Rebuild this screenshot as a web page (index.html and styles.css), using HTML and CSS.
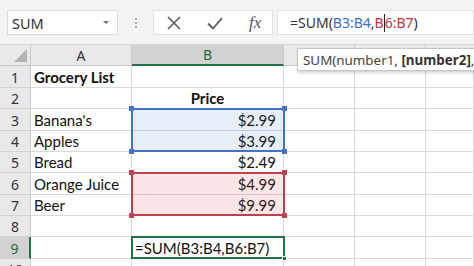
FILE: index.html
```html
<!DOCTYPE html>
<html>
<head>
<meta charset="utf-8">
<link rel="stylesheet" href="styles.css">
</head>
<body>
<div class="app">
  <div class="toolbar">
    <div class="namebox"><span class="nb-text">SUM</span><span class="nb-arrow"></span></div>
    <div class="grip"><i></i><i></i><i></i></div>
    <div class="buttons">
      <svg class="ico" width="16" height="16" viewBox="0 0 16 16"><path d="M2 2 L14 14 M14 2 L2 14" stroke="#5a5a5a" stroke-width="1.6" fill="none"/></svg>
      <svg class="ico" width="18" height="16" viewBox="0 0 18 16"><path d="M2 8.5 L7 13.5 L16 3" stroke="#5a5a5a" stroke-width="1.8" fill="none"/></svg>
      <span class="fx">fx</span>
    </div>
    <div class="formula"><span>=SUM(<span class="ref-b">B3:B4</span>,<span class="ref-r">B<span class="caret"></span>6:B7</span>)</span></div>
  </div>
  <div class="sheet">
    <div class="grid">
      <div class="corner"><span class="tri"></span></div>
      <div class="ch">A</div>
      <div class="ch sel">B</div>
      <div class="ch"></div>
      <div class="ch"></div>
      <div class="ch last"></div>

      <div class="rh">1</div><div class="c b">Grocery List</div><div class="c"></div><div class="c"></div><div class="c"></div><div class="c"></div>
      <div class="rh">2</div><div class="c"></div><div class="c b center">Price</div><div class="c"></div><div class="c"></div><div class="c"></div>
      <div class="rh">3</div><div class="c">Banana's</div><div class="c num">$2.99</div><div class="c"></div><div class="c"></div><div class="c"></div>
      <div class="rh">4</div><div class="c">Apples</div><div class="c num">$3.99</div><div class="c"></div><div class="c"></div><div class="c"></div>
      <div class="rh">5</div><div class="c">Bread</div><div class="c num">$2.49</div><div class="c"></div><div class="c"></div><div class="c"></div>
      <div class="rh">6</div><div class="c">Orange Juice</div><div class="c num">$4.99</div><div class="c"></div><div class="c"></div><div class="c"></div>
      <div class="rh">7</div><div class="c">Beer</div><div class="c num">$9.99</div><div class="c"></div><div class="c"></div><div class="c"></div>
      <div class="rh">8</div><div class="c"></div><div class="c"></div><div class="c"></div><div class="c"></div><div class="c"></div>
      <div class="rh sel">9</div><div class="c"></div><div class="c">=SUM(B3:B4,B6:B7)</div><div class="c"></div><div class="c"></div><div class="c"></div>
      <div class="rh">10</div><div class="c"></div><div class="c"></div><div class="c"></div><div class="c"></div><div class="c"></div>
    </div>
    <div class="range blue"><i class="h tl"></i><i class="h tr"></i><i class="h bl"></i><i class="h br"></i></div>
    <div class="range red"><i class="h tl"></i><i class="h tr"></i><i class="h bl"></i><i class="h br"></i></div>
    <div class="active"><i class="fill"></i></div>
  </div>
  <div class="tooltip"><span>SUM(number1, <b>[number2]</b>, [...])</span></div>
</div>
</body>
</html>
```
FILE: styles.css
```css
* { box-sizing: border-box; }
html, body { margin: 0; padding: 0; }
body { width: 474px; height: 266px; overflow: hidden; background: #fff; font-family: "Noto Sans", "Open Sans", sans-serif; }
.app { position: relative; width: 474px; height: 266px; overflow: hidden; }

.toolbar { height: 45px; background: #f3f3f3; display: flex; align-items: flex-start; padding-top: 10px; padding-left: 7px; border-bottom: 1px solid #d6d6d6; }
.namebox { width: 111px; height: 25px; background: #fff; border: 1px solid #dcdcdc; display: flex; align-items: center; justify-content: space-between; padding: 0 8px 0 4px; }
.nb-text { font-size: 14.5px; color: #333; }
.nb-arrow { width: 0; height: 0; border-left: 3px solid transparent; border-right: 3px solid transparent; border-top: 3px solid #777; }
.grip { width: 35px; height: 25px; display: flex; flex-direction: column; align-items: center; justify-content: center; gap: 2px; }
.grip i { display: block; width: 2px; height: 2px; background: #a8a8a8; }
.buttons { width: 120px; height: 25px; background: #fff; border: 1px solid #e2e2e2; display: flex; align-items: center; padding-left: 12px; gap: 24px; }
.ico { display: block; }
.fx { font-family: "Liberation Serif", serif; font-style: italic; font-size: 17px; color: #555; margin-left: 1px; }
.formula { flex: 1; height: 25px; margin-left: 4px; background: #fff; border: 1px solid #e2e2e2; font-size: 14px; color: #333; display: flex; align-items: center; padding-left: 12px; white-space: nowrap; }
.ref-b { color: #3b6fc9; }
.ref-r { color: #c8323c; }
.caret { display: inline-block; width: 1px; height: 18px; background: #222; vertical-align: -4px; }

.sheet { position: relative; }
.grid { display: grid; grid-template-columns: 31px 101px 152px 71px 71px 48px; grid-template-rows: 21px 22px 21px 22px 21px 21px 22px 21px 21px 22px 21px; font-family: "Lato", "Liberation Sans", sans-serif; font-size: 15px; color: #111; }
.corner { background: #e9e9e9; border-right: 1px solid #c9c9c9; border-bottom: 1px solid #c9c9c9; position: relative; }
.tri { position: absolute; right: 3px; bottom: 3px; width: 0; height: 0; border-left: 13px solid transparent; border-bottom: 13px solid #b5b5b5; }
.ch { background: #e9e9e9; border-right: 1px solid #c9c9c9; border-bottom: 1px solid #c9c9c9; display: flex; align-items: center; justify-content: center; font-family: "Noto Sans", sans-serif; font-size: 14px; color: #333; }
.ch.sel { background: #d2d2d2; border-bottom: 2px solid #217346; color: #1e6b41; }
.ch.last { border-right: none; }
.rh { background: #e9e9e9; border-right: 1px solid #c9c9c9; border-bottom: 1px solid #d2d2d2; display: flex; align-items: center; justify-content: center; font-family: "Noto Sans", sans-serif; font-size: 14px; color: #333; padding-top: 1px; }
.rh.sel { background: #d2d2d2; border-right: 2px solid #217346; color: #1e6b41; }
.c { border-right: 1px solid #dadada; border-bottom: 1px solid #dadada; display: flex; align-items: flex-end; padding: 0 3px 1px 3px; white-space: nowrap; overflow: visible; }
.c.b { font-weight: 700; }
.c.center { justify-content: center; }
.c.num { justify-content: flex-end; padding-right: 7px; }

.range { position: absolute; left: 131px; width: 154px; height: 44px; border: 2px solid; }
.range.blue { top: 63px; border-color: #4472c4; background: rgba(68, 114, 196, 0.12); }
.range.red { top: 127px; border-color: #c0404e; background: rgba(220, 80, 80, 0.14); }
.h { position: absolute; width: 5px; height: 5px; }
.blue .h { background: #4472c4; }
.red .h { background: #c0404e; }
.h.tl { left: -4px; top: -4px; }
.h.tr { right: -4px; top: -4px; }
.h.bl { left: -4px; bottom: -4px; }
.h.br { right: -4px; bottom: -4px; }
.active { position: absolute; left: 131px; top: 191px; width: 154px; height: 23px; border: 2px solid #217346; }
.fill { position: absolute; right: -4px; bottom: -4px; width: 5px; height: 5px; background: #217346; border: 1px solid #fff; }

.tooltip { position: absolute; left: 297px; top: 48px; width: 200px; height: 23px; background: #fff; border: 1px solid #c6c6c6; box-shadow: 1px 2px 3px rgba(0,0,0,0.18); font-size: 13.4px; color: #444; padding-left: 5px; display: flex; align-items: center; white-space: nowrap; }
.tooltip b { font-weight: 700; color: #333; }
```
